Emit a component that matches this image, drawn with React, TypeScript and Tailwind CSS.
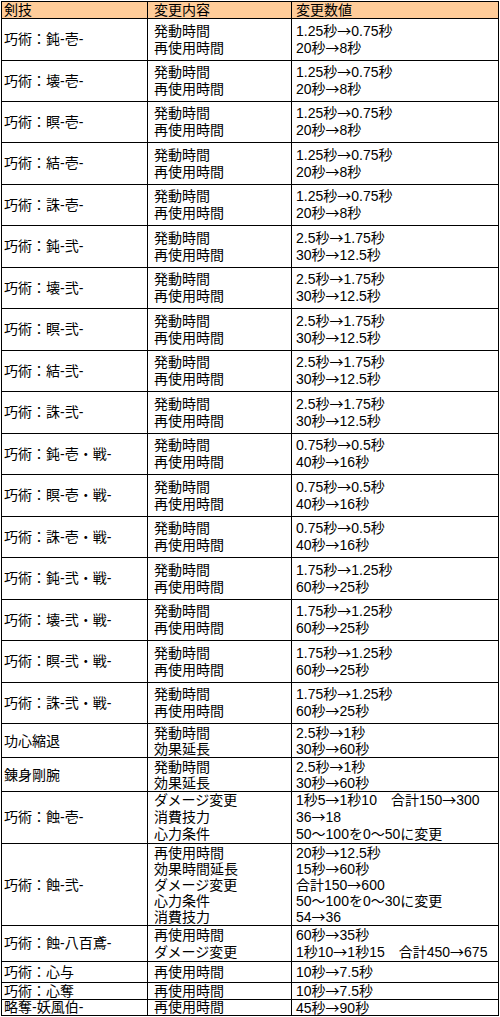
import React from "react";

interface Row {
  name: string;
  items: string[];
  values: string[];
  h: number; // row height incl. top border
  line?: string;
}

const two = (name: string, a: string, b: string, h: number): Row => ({
  name,
  items: ["発動時間", "再使用時間"],
  values: [a, b],
  h,
});

const heights = [42, 41, 41, 42, 41, 42, 41, 42, 41, 42, 41, 42, 41, 42, 41, 42, 41];

const skillNames = [
  "巧術：鈍-壱-",
  "巧術：壊-壱-",
  "巧術：瞑-壱-",
  "巧術：結-壱-",
  "巧術：誅-壱-",
  "巧術：鈍-弐-",
  "巧術：壊-弐-",
  "巧術：瞑-弐-",
  "巧術：結-弐-",
  "巧術：誅-弐-",
  "巧術：鈍-壱・戦-",
  "巧術：瞑-壱・戦-",
  "巧術：誅-壱・戦-",
  "巧術：鈍-弐・戦-",
  "巧術：壊-弐・戦-",
  "巧術：瞑-弐・戦-",
  "巧術：誅-弐・戦-",
];

const valueFor = (i: number): [string, string] => {
  if (i < 5) return ["1.25秒→0.75秒", "20秒→8秒"];
  if (i < 10) return ["2.5秒→1.75秒", "30秒→12.5秒"];
  if (i < 13) return ["0.75秒→0.5秒", "40秒→16秒"];
  return ["1.75秒→1.25秒", "60秒→25秒"];
};

const rows: Row[] = [
  ...skillNames.map((n, i) => two(n, valueFor(i)[0], valueFor(i)[1], heights[i])),
  { name: "功心縮退", items: ["発動時間", "効果延長"], values: ["2.5秒→1秒", "30秒→60秒"], h: 34, line: "h-[16px] leading-[16px]" },
  { name: "錬身剛腕", items: ["発動時間", "効果延長"], values: ["2.5秒→1秒", "30秒→60秒"], h: 34, line: "h-[16px] leading-[16px]" },
  {
    name: "巧術：蝕-壱-",
    items: ["ダメージ変更", "消費技力", "心力条件"],
    values: ["1秒5→1秒10　合計150→300", "36→18", "50～100を0～50に変更"],
    h: 52,
  },
  {
    name: "巧術：蝕-弐-",
    items: ["再使用時間", "効果時間延長", "ダメージ変更", "心力条件", "消費技力"],
    values: ["20秒→12.5秒", "15秒→60秒", "合計150→600", "50～100を0～30に変更", "54→36"],
    h: 82,
    line: "h-[16px] leading-[16px]",
  },
  {
    name: "巧術：蝕-八百鳶-",
    items: ["再使用時間", "ダメージ変更"],
    values: ["60秒→35秒", "1秒10→1秒15　合計450→675"],
    h: 36,
  },
  { name: "巧術：心与", items: ["再使用時間"], values: ["10秒→7.5秒"], h: 21 },
  { name: "巧術：心奪", items: ["再使用時間"], values: ["10秒→7.5秒"], h: 17, line: "h-[16px] leading-[16px]" },
  { name: "略奪-妖風伯-", items: ["再使用時間"], values: ["45秒→90秒"], h: 16, line: "h-[15px] leading-[15px]" },
];

const font = "font-['Liberation_Sans','Noto_Sans_CJK_JP',sans-serif]";

// arrows drawn with the CJK face so they get full width, as in the sheet
const withArrows = (t: string) => {
  const parts = t.split("→");
  return parts.map((p, i) => (
    <React.Fragment key={i}>
      {p}
      {i < parts.length - 1 && (
        <span className="font-['Noto_Sans_CJK_JP',sans-serif] leading-none">→</span>
      )}
    </React.Fragment>
  ));
};

export default function App() {
  return (
    <div className={`min-h-screen bg-white pt-[1px] pl-[1px] text-[14px] text-black ${font}`}>
      <div className="w-[498px] border border-black">
        {/* header */}
        <div className="grid h-[16px] grid-cols-[145px_144px_1fr] bg-[#ffcc99] leading-[16px]">
          <div className="pl-[2px]">剣技</div>
          <div className="border-l border-black pl-[6px]">変更内容</div>
          <div className="border-l border-black pl-[4px]">変更数値</div>
        </div>

        {rows.map((r) => {
          const line = r.line ?? "h-[17px] leading-[17px]";
          return (
            <div
              key={r.name}
              className="grid grid-cols-[145px_144px_1fr] overflow-hidden border-t border-black"
              style={{ height: r.h }}
            >
              <div className="flex items-center pl-[2px] whitespace-nowrap">
                <div className={line}>{r.name}</div>
              </div>
              <div className="flex flex-col justify-center border-l border-black pl-[6px] whitespace-nowrap">
                {r.items.map((t, i) => (
                  <div key={i} className={`${line} shrink-0`}>
                    {t}
                  </div>
                ))}
              </div>
              <div className="flex flex-col justify-center border-l border-black pl-[4px] whitespace-nowrap">
                {r.values.map((t, i) => (
                  <div key={i} className={`${line} shrink-0`}>
                    {withArrows(t)}
                  </div>
                ))}
              </div>
            </div>
          );
        })}
      </div>
    </div>
  );
}
